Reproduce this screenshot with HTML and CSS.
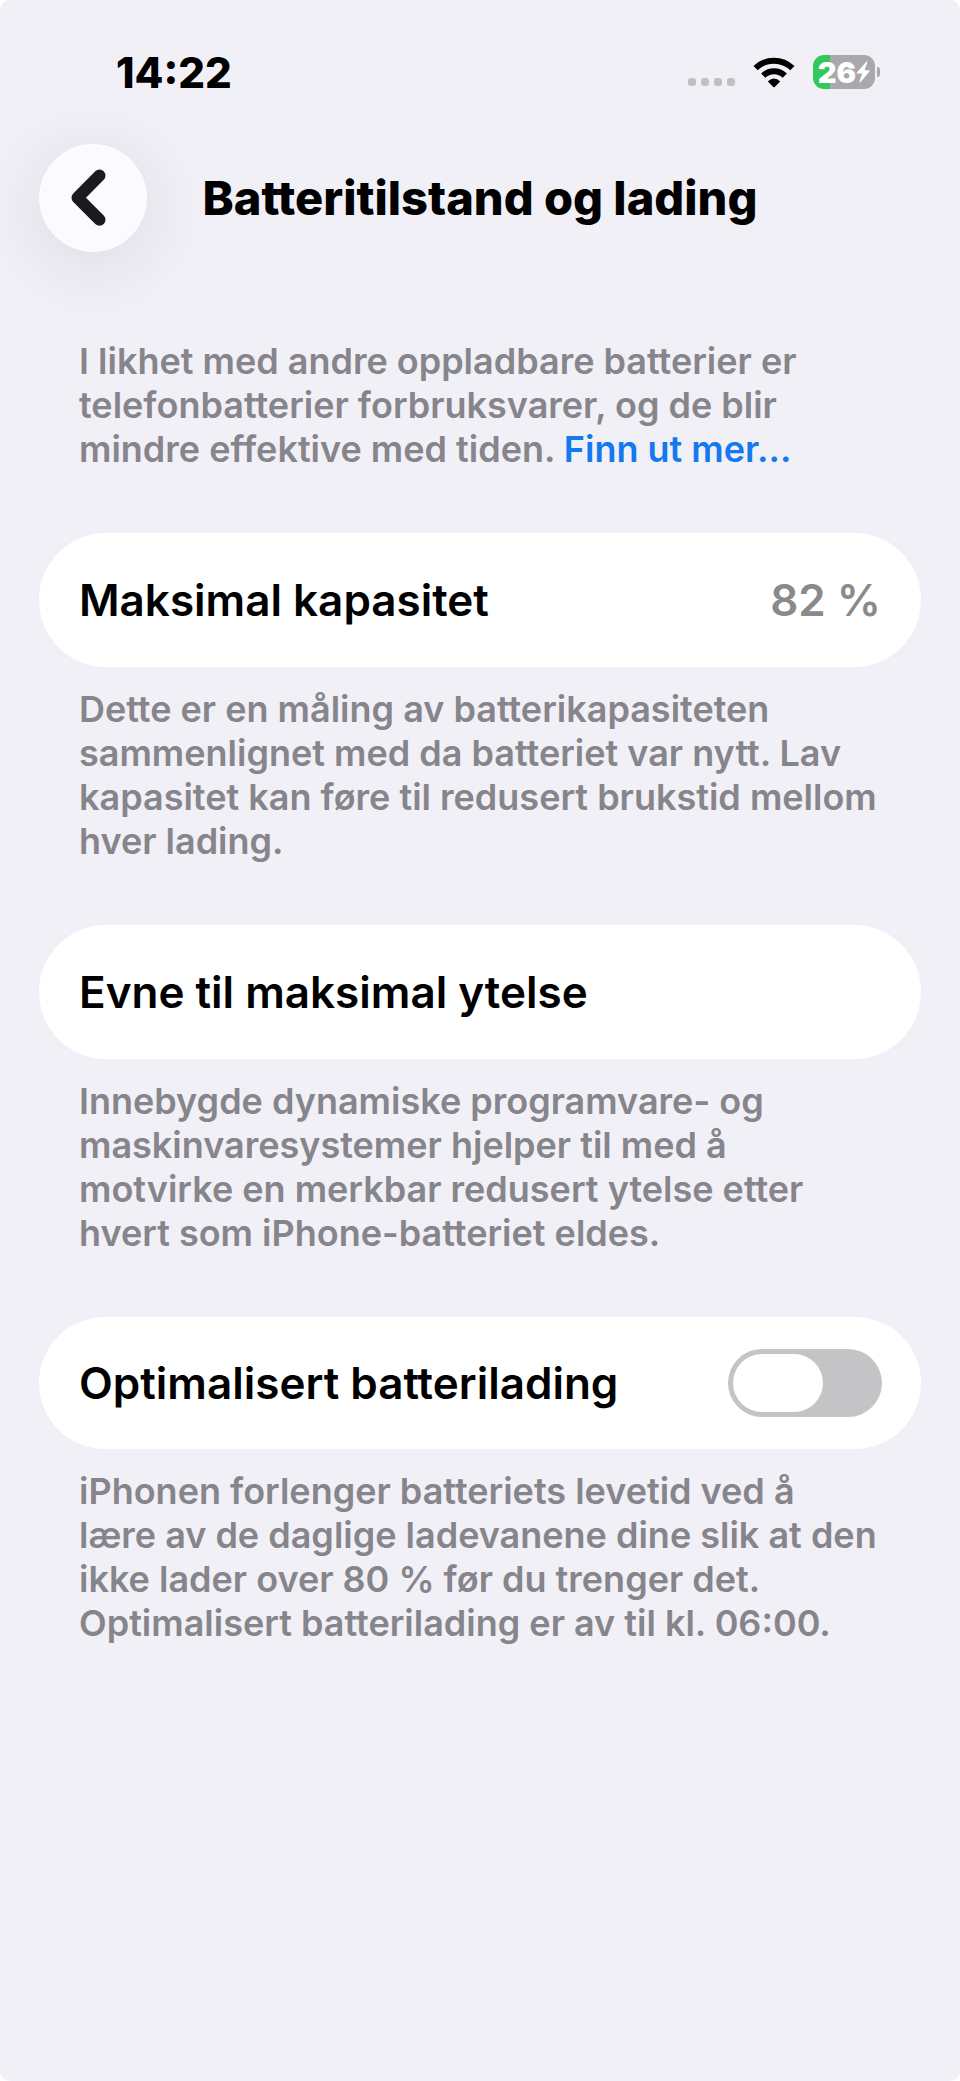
FILE: index.html
```html
<!DOCTYPE html>
<html lang="nb">
<head>
<meta charset="utf-8">
<meta name="viewport" content="width=device-width, initial-scale=1">
<title>Batteritilstand og lading</title>
<link rel="stylesheet" href="styles.css">
</head>
<body>

<div class="screen">

<div class="statusbar">
  <time class="clock">14:22</time>
  <div class="status-icons">
    <div class="signal"><i></i><i></i><i></i><i></i></div>
    <svg class="wifi" width="42" height="32" viewBox="0 0 42 32" aria-hidden="true">
      <g fill="none" stroke="#000" stroke-width="6">
        <path d="M2.6 12.2 A26.2 26.2 0 0 1 39.4 12.2"/>
        <path d="M10.2 19.6 A15.6 15.6 0 0 1 31.8 19.6"/>
      </g>
      <path d="M14.8 25.4 Q21 19.6 27.2 25.4 L21.7 30.9 Q21 31.5 20.3 30.9 Z"/>
    </svg>
    <div class="battery">
      <span>26</span>
      <svg width="14" height="22" viewBox="0 0 14 22" aria-hidden="true">
        <path fill="#fff" d="M10.5 0.5 L0.8 11.4 Q0.3 12.4 1.4 12.4 H6.2 L3.4 20.8 Q3.6 21.8 4.4 21.2 L13.5 10.4 Q13.9 9.3 12.8 9.3 H8.6 L11.4 1.2 Q11.3 0 10.5 0.5 Z"/>
      </svg>
    </div>
  </div>
</div>

<header class="navbar">
  <button type="button" class="back" aria-label="Tilbake">
    <svg width="108" height="108" viewBox="0 0 108 108" aria-hidden="true">
      <path d="M60.5 31.5 L38.5 53.7 L60.5 75.7"/>
    </svg>
  </button>
  <h1>Batteritilstand og lading</h1>
</header>

<main>
  <p class="note">I likhet med andre oppladbare batterier er telefonbatterier forbruksvarer, og de blir mindre effektive med tiden. <a href="#">Finn ut mer...</a></p>

  <section>
    <div class="row">
      <h2>Maksimal kapasitet</h2>
      <span class="value">82 %</span>
    </div>
    <p class="note">Dette er en måling av batterikapasiteten sammenlignet med da batteriet var nytt. Lav kapasitet kan føre til redusert brukstid mellom hver lading.</p>
  </section>

  <section>
    <div class="row">
      <h2>Evne til maksimal ytelse</h2>
    </div>
    <p class="note">Innebygde dynamiske programvare- og maskinvaresystemer hjelper til med å motvirke en merkbar redusert ytelse etter hvert som iPhone-batteriet eldes.</p>
  </section>

  <section>
    <div class="row row-switch">
      <label for="optimized">Optimalisert batterilading</label>
      <input type="checkbox" class="switch" id="optimized" role="switch">
    </div>
    <p class="note">iPhonen forlenger batteriets levetid ved å lære&nbsp;av de daglige ladevanene dine slik at den ikke lader over 80 % før du trenger det. Optimalisert batterilading er av til kl. 06:00.</p>
  </section>
</main>

</div>

</body>
</html>
```
FILE: styles.css
```css
* {box-sizing: border-box;}

body {
  margin: 0;
  background: #fff;
  color: #000;
  font-family: Inter, "Liberation Sans", sans-serif;
}

.screen {
  min-height: 100vh;
  padding: 0 39px 40px;
  background: #f1f0f6;
  border-radius: 10px;
}

/* Status bar */
.statusbar {
  display: flex;
  justify-content: space-between;
  align-items: center;
  height: 144px;
  padding: 0 41px 0 77px;
}

.clock {
  font-size: 42px;
  font-weight: 800;
}

.status-icons {
  display: flex;
  align-items: center;
  gap: 18px;
}

.signal {
  display: flex;
  gap: 5px;
  padding-top: 20px;
}

.signal i {
  width: 8px;
  height: 8px;
  border-radius: 3px;
  background: #bfbfc4;
}

.battery {
  position: relative;
  display: flex;
  align-items: center;
  justify-content: center;
  width: 62px;
  height: 34px;
  margin-right: 5px;
  border-radius: 11px;
  background: linear-gradient(to right, #34c759 17px, #a9a9ad 17px);
  color: #fff;
  font-size: 29px;
  font-weight: 900;
}

/* battery terminal */
.battery::after {
  content: "";
  position: absolute;
  left: 64px;
  width: 3px;
  height: 10px;
  border-radius: 0 3px 3px 0;
  background: #a9a9ad;
}

/* Title bar with back button */
.navbar {
  display: grid;
  grid-template-columns: 108px 1fr 108px;
  align-items: center;
  margin-bottom: 87px;
}

.back {
  width: 108px;
  height: 108px;
  padding: 0;
  border: 1px solid #fff;
  border-radius: 50%;
  background: #fafaff;
  box-shadow: 0 12px 80px rgba(40, 40, 80, 0.11);
  cursor: pointer;
}

.back svg {
  display: block;
  margin: -1px;
}

.back path {
  fill: none;
  stroke: #1a1a1f;
  stroke-width: 12;
  stroke-linecap: round;
  stroke-linejoin: round;
}

h1 {
  margin: 0;
  font-size: 47px;
  font-weight: 800;
  line-height: 54px;
  text-align: center;
  white-space: nowrap;
}

/* Settings rows */
main {
  display: flex;
  flex-direction: column;
  gap: 62px;
}

.row {
  display: flex;
  justify-content: space-between;
  align-items: center;
  margin-bottom: 20px;
  padding: 40px;
  border-radius: 67px;
  background: #fff;
  font-size: 44px;
  font-weight: 600;
  line-height: 54px;
}

.row h2 {
  margin: 0;
  font-size: inherit;
  font-weight: inherit;
}

.row-switch {
  padding: 32px 39px 32px 40px;
}

.value {
  color: #8a8a8d;
}

.note {
  margin: 0;
  padding: 0 36px 0 40px;
  color: #86858b;
  font-size: 36px;
  font-weight: 600;
  line-height: 44px;
}

.note a {
  color: #1479f0;
  text-decoration: none;
}

/* Toggle switch */
.switch {
  appearance: none;
  width: 154px;
  height: 68px;
  margin: 0;
  padding: 5px;
  border-radius: 34px;
  background: #c4c4c7;
  cursor: pointer;
}

.switch::before {
  content: "";
  display: block;
  width: 90px;
  height: 58px;
  border-radius: 29px;
  background: #fff;
}

.switch:checked {
  background: #34c759;
}

.switch:checked::before {
  margin-left: auto;
}
```
